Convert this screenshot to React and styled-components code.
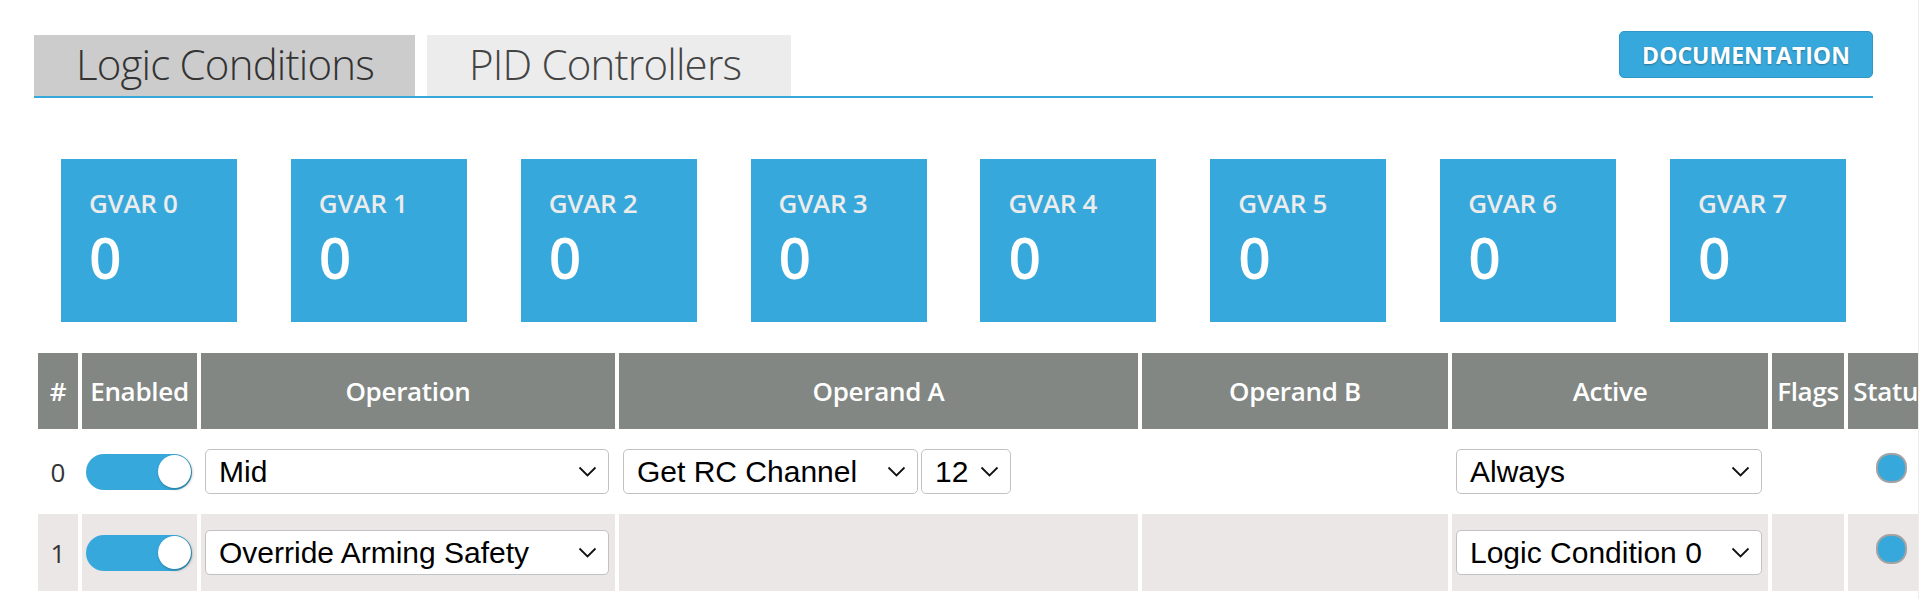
import styled, { createGlobalStyle } from 'styled-components';

const BLUE = '#37a8db';

const GlobalStyle = createGlobalStyle`
	html, body {
		margin: 0;
		padding: 0;
		background: #fff;
		overflow: hidden;
	}
	* {
		box-sizing: border-box;
	}
`;

const Viewport = styled.div`
	width: 100vw;
	height: 100vh;
	overflow: hidden;
	border-right: 1px solid #ededed;
	font-family: "Open Sans", "Liberation Sans", sans-serif;
	color: #333;
`;
const Content = styled.div`
	width: 1873px;
	padding: 31px 0 0 34px;
`;
const TopBar = styled.div`
	display: flex;
	justify-content: space-between;
	align-items: flex-start;
	border-bottom: 2px solid ${BLUE};
`;
const Tabs = styled.div`
	display: flex;
	gap: 12px;
	margin-top: 4px;
`;
const Tab = styled.div`
	width: ${p => p.$w}px;
	height: 61px;
	padding: 0 0 4px 42px;
	line-height: 57px;
	font-size: 42px;
	font-weight: 300;
	letter-spacing: -0.8px;
	white-space: nowrap;
	background: ${p => (p.$active ? '#cccccc' : '#ececec')};
	color: ${p => (p.$active ? '#333' : '#444')};
`;
const DocButton = styled.div`
	display: flex;
	align-items: center;
	justify-content: center;
	width: 254px;
	height: 47px;
	background: ${BLUE};
	border: 1px solid #3297c6;
	border-radius: 5px;
	color: #fff;
	font-size: 23px;
	font-weight: 700;
	text-shadow: 0 1px 2px rgba(0, 0, 0, 0.3);
`;

const GvarGrid = styled.div`
	display: grid;
	grid-template-columns: repeat(8, 1fr);
	justify-items: center;
	width: 1839px;
	margin-top: 61px;
`;
const GvarBox = styled.div`
	width: 176px;
	height: 163px;
	padding: 27px 28px;
	background: ${BLUE};
`;
const GvarLabel = styled.div`
	font-size: 26px;
	font-weight: 600;
	line-height: 35px;
	color: #ececec;
	letter-spacing: -0.3px;
`;
const GvarValue = styled.div`
	margin-top: 8px;
	font-size: 57px;
	font-weight: 600;
	line-height: 1;
	color: #fff;
`;

const Table = styled.table`
	width: 1906px;
	margin-top: 27px;
	border-collapse: separate;
	border-spacing: 4px;
	table-layout: fixed;
`;
const Th = styled.th`
	width: ${p => p.$w}px;
	height: 76px;
	padding: 0 4px;
	background: #828784;
	color: #fff;
	font-size: 26px;
	font-weight: 600;
	text-align: center;
	white-space: nowrap;
	overflow: hidden;
	letter-spacing: -0.3px;
`;
const Td = styled.td`
	height: 77px;
	padding: 0 6px 0 4px;
	background: ${p => p.$bg};
	vertical-align: middle;
	font-size: 26px;
	text-align: ${p => p.$align || 'left'};
`;
const RowNum = styled.span`
	color: #333;
	padding-left: 2px;
`;
const Toggle = styled.span`
	display: flex;
	align-items: center;
	justify-content: flex-end;
	width: 106px;
	height: 36px;
	padding: 0 1px;
	border-radius: 18px;
	background: ${BLUE};
`;
const Knob = styled.span`
	width: 33px;
	height: 33px;
	border-radius: 50%;
	background: #fff;
	box-shadow: 1px 1px 3px rgba(0, 0, 0, 0.35);
`;
const SelectRow = styled.div`
	display: flex;
	gap: 3px;
`;
const Select = styled.div`
	display: flex;
	align-items: center;
	justify-content: space-between;
	gap: 12px;
	width: ${p => (p.$w ? p.$w + 'px' : 'auto')};
	height: 45px;
	padding: 0 11px 0 13px;
	border: 1.5px solid #c2c2c2;
	border-radius: 5px;
	background: #fff;
	font-family: "Liberation Sans", Arial, sans-serif;
	font-size: 30px;
	color: #000;
	white-space: nowrap;
`;
const StatusDot = styled.span`
	display: block;
	width: 31px;
	height: 30px;
	margin: -7px auto 0;
	border: 2px solid #a3a3a3;
	border-radius: 14px;
	background: ${BLUE};
`;

const Chevron = () => (
	<svg width="19" height="11" viewBox="0 0 19 11" fill="none">
		<path d="M1.5 1.5l8 8 8-8" stroke="#111" strokeWidth="1.8" />
	</svg>
);

const Dropdown = ({ value, w }) => (
	<Select $w={w}>
		<span>{value}</span>
		<Chevron />
	</Select>
);

const gvars = [0, 1, 2, 3, 4, 5, 6, 7];

const columns = [
	{ name: '#', w: 40 },
	{ name: 'Enabled', w: 115 },
	{ name: 'Operation', w: 414 },
	{ name: 'Operand A', w: 519 },
	{ name: 'Operand B', w: 306 },
	{ name: 'Active', w: 316 },
	{ name: 'Flags', w: 72 },
	{ name: 'Status', w: 88 },
];

const conditions = [
	{ id: 0, operation: 'Mid', operandA: ['Get RC Channel', '12'], active: 'Always' },
	{ id: 1, operation: 'Override Arming Safety', operandA: null, active: 'Logic Condition 0' },
];

const App = () => {
	return (
		<Viewport>
			<GlobalStyle />
			<Content>
				<TopBar>
					<Tabs>
						<Tab $active $w={381}>Logic Conditions</Tab>
						<Tab $w={364}>PID Controllers</Tab>
					</Tabs>
					<DocButton>DOCUMENTATION</DocButton>
				</TopBar>

				<GvarGrid>
					{gvars.map(i => (
						<GvarBox key={i}>
							<GvarLabel>GVAR {i}</GvarLabel>
							<GvarValue>0</GvarValue>
						</GvarBox>
					))}
				</GvarGrid>

				<Table>
					<thead>
						<tr>
							{columns.map(c => (
								<Th key={c.name} $w={c.w}>{c.name}</Th>
							))}
						</tr>
					</thead>
					<tbody>
						{conditions.map(row => {
							const bg = row.id % 2 ? '#eae7e6' : '#fff';
							return (
								<tr key={row.id}>
									<Td $bg={bg} $align="center"><RowNum>{row.id}</RowNum></Td>
									<Td $bg={bg}><Toggle><Knob /></Toggle></Td>
									<Td $bg={bg}><Dropdown value={row.operation} /></Td>
									<Td $bg={bg}>
										{row.operandA ? (
											<SelectRow>
												<Dropdown value={row.operandA[0]} w={295} />
												<Dropdown value={row.operandA[1]} />
											</SelectRow>
										) : null}
									</Td>
									<Td $bg={bg}></Td>
									<Td $bg={bg}><Dropdown value={row.active} /></Td>
									<Td $bg={bg}></Td>
									<Td $bg={bg}><StatusDot /></Td>
								</tr>
							);
						})}
					</tbody>
				</Table>
			</Content>
		</Viewport>
	);
};

export default App;
